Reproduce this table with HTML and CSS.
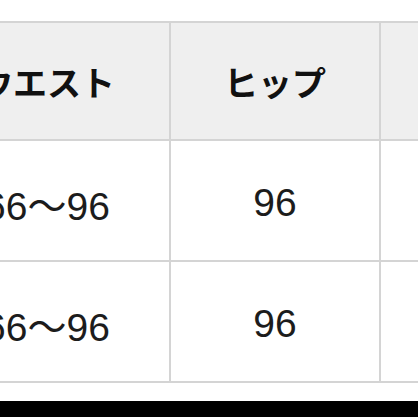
FILE: index.html
```html
<!DOCTYPE html>
<html lang="ja">
<head>
<meta charset="utf-8">
<link rel="stylesheet" href="styles.css">
</head>
<body>
<div class="page">
  <div class="size-table">
    <div class="cell head">ウエスト</div>
    <div class="cell head">ヒップ</div>
    <div class="cell head">着丈</div>
    <div class="cell">66〜96</div>
    <div class="cell">96</div>
    <div class="cell">60</div>
    <div class="cell">66〜96</div>
    <div class="cell">96</div>
    <div class="cell">60</div>
  </div>
  <div class="bar"></div>
</div>
</body>
</html>
```
FILE: styles.css
```css
html, body {
  margin: 0;
  padding: 0;
  background: #ffffff;
  overflow: hidden;
}
.page {
  width: 418px;
  height: 418px;
  overflow: hidden;
  padding-top: 21px;
  box-sizing: border-box;
}
.size-table {
  display: grid;
  grid-template-columns: 246px 210px 210px;
  grid-template-rows: 118px 121px 121px;
  margin-left: -75px;
  width: 666px;
  border-top: 2px solid #d4d4d4;
  font-family: "Liberation Sans", "Noto Sans CJK JP", sans-serif;
}
.cell {
  box-sizing: border-box;
  border-right: 2px solid #d4d4d4;
  border-bottom: 2px solid #d4d4d4;
  display: flex;
  align-items: center;
  justify-content: center;
  font-size: 39px;
  color: #1c1c1c;
  background: #ffffff;
  padding-top: 4px;
}
.cell.head {
  background: #efefef;
  font-family: "Noto Sans CJK JP", sans-serif;
  font-size: 34px;
  font-weight: 700;
  color: #111111;
  padding-top: 0;
}
.bar {
  margin-top: 18px;
  height: 16px;
  background: #000000;
}
```
